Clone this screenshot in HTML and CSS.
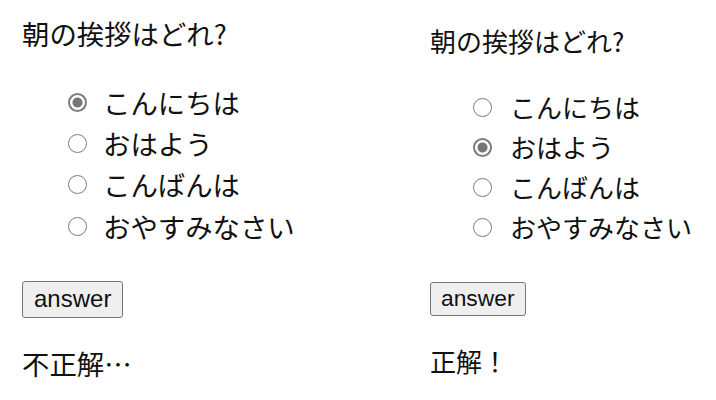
FILE: index.html
```html
<!DOCTYPE html>
<html lang="ja">
<head>
    <meta charset="UTF-8">
    <meta name="viewport" content="width=device-width, initial-scale=1.0">
    <title>朝の挨拶クイズ</title>
    <link rel="stylesheet" href="styles.css">
</head>
<body>
    <div class="screens">
        <!-- 不正解のとき -->
        <div class="quiz">
            <p class="question">朝の挨拶はどれ?</p>
            <ul class="choices">
                <li><label><input type="radio" name="q1" class="radio" checked>こんにちは</label></li>
                <li><label><input type="radio" name="q1" class="radio">おはよう</label></li>
                <li><label><input type="radio" name="q1" class="radio">こんばんは</label></li>
                <li><label><input type="radio" name="q1" class="radio">おやすみなさい</label></li>
            </ul>
            <button type="button" class="answer">answer</button>
            <p class="result">不正解…</p>
        </div>

        <!-- 正解のとき -->
        <div class="quiz quiz-small">
            <p class="question">朝の挨拶はどれ?</p>
            <ul class="choices">
                <li><label><input type="radio" name="q2" class="radio">こんにちは</label></li>
                <li><label><input type="radio" name="q2" class="radio" checked>おはよう</label></li>
                <li><label><input type="radio" name="q2" class="radio">こんばんは</label></li>
                <li><label><input type="radio" name="q2" class="radio">おやすみなさい</label></li>
            </ul>
            <button type="button" class="answer">answer</button>
            <p class="result">正解！</p>
        </div>
    </div>
</body>
</html>
```

FILE: styles.css
```css
body {
    margin: 0;
    padding: 0;
    background-color: #fff;
    color: #111;
    font-family: "Noto Sans CJK JP", "Noto Sans", sans-serif;
}

.screens {
    display: flex;
}

/* left screen */
.quiz {
    width: 408px;
    box-sizing: border-box;
    padding: 13px 0 0 22px;
    font-size: 27.4px;
    line-height: 40.5px;
}

.question {
    margin: 0 0 28px;
}

.choices {
    margin: 0;
    padding-left: 46px;
    list-style: none;
}

.choices li {
    height: 41.3px;
    display: flex;
    align-items: center;
}

.choices label {
    display: flex;
    align-items: center;
}

.radio {
    appearance: none;
    -webkit-appearance: none;
    width: 19px;
    height: 19px;
    margin: 0 16px 0 0;
    border: 1.5px solid #7b7b7b;
    border-radius: 50%;
    background-color: #fff;
    box-sizing: border-box;
}

.radio:checked {
    border-width: 2px;
    background: radial-gradient(circle, #777 0, #777 4.5px, #fff 5.5px);
}

.answer {
    display: block;
    margin-top: 34px;
    height: 37px;
    padding: 0 11px;
    font-family: "Liberation Sans", Arial, sans-serif;
    font-size: 24px;
    color: #111;
    background-color: #efefef;
    border: 1px solid #767676;
    border-radius: 3px;
}

.result {
    margin: 25px 0 0;
}

/* right screen, captured a little smaller */
.quiz-small {
    flex: 1;
    padding-top: 22px;
    font-size: 26px;
    line-height: 38.6px;
}

.quiz-small .question {
    margin-bottom: 27px;
}

.quiz-small .choices {
    padding-left: 43px;
}

.quiz-small .choices li {
    height: 40px;
}

.quiz-small .radio {
    margin-right: 18px;
}

.quiz-small .answer {
    margin-top: 34px;
    height: 34px;
    padding: 0 10px;
    font-size: 22.8px;
}

.quiz-small .result {
    margin-top: 26px;
}
```
